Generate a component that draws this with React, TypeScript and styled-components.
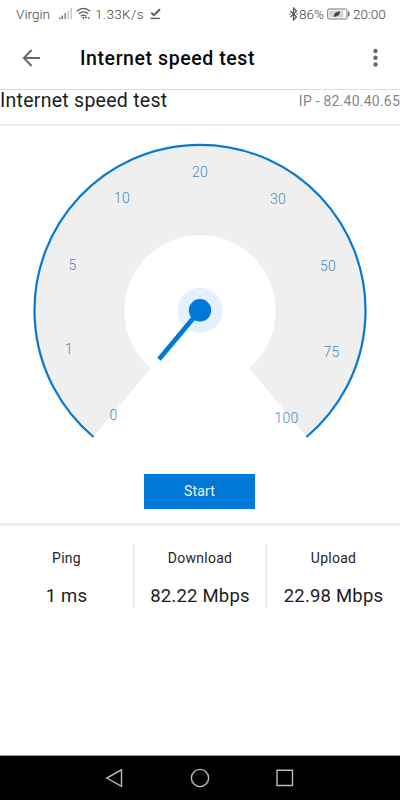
import React from "react";
import styled, { createGlobalStyle } from "styled-components";

const GlobalStyle = createGlobalStyle`
  * { box-sizing: border-box; }
  body { margin: 0; background: #fff; font-family: Roboto, "Noto Sans", sans-serif; }
  svg { display: block; flex: none; }
`;

const Screen = styled.main`
  width: 400px;
  height: 800px;
  display: flex;
  flex-direction: column;
  background: #fff;
  overflow: hidden;
`;

const StatusBar = styled.div`
  height: 28px;
  padding: 0 13px 0 16px;
  display: flex;
  align-items: center;
  justify-content: space-between;
  color: #444;
  font-size: 13.5px;
  font-weight: 300;
  line-height: 28px;
  white-space: nowrap;
`;

const StatusGroup = styled.div<{ $gap?: number }>`
  display: flex;
  align-items: center;
  gap: ${(p) => p.$gap ?? 0}px;
`;

const StatusText = styled.span<{ $width: number; $spacing?: number }>`
  width: ${(p) => p.$width}px;
  letter-spacing: ${(p) => p.$spacing ?? 0}px;
`;

const AppBar = styled.header`
  height: 62px;
  display: flex;
  align-items: center;
  padding: 0 12px 2px 19px;
  border-bottom: 1px solid #dcdcdc;
`;

const IconButton = styled.button`
  border: 0;
  padding: 0;
  background: none;
  width: 24px;
  height: 24px;
`;

const Title = styled.h1`
  margin: 0 0 0 37px;
  padding-top: 2px;
  flex: 1;
  font-size: 19.5px;
  font-weight: 500;
  line-height: 24px;
  letter-spacing: 0.58px;
  color: #080808;
`;

const SubHeader = styled.div`
  height: 36px;
  display: flex;
  justify-content: space-between;
  border-bottom: 2px solid #efefef;
  white-space: nowrap;
`;

const SubTitle = styled.h2`
  margin: 0;
  font-size: 19.5px;
  font-weight: 400;
  line-height: 22px;
  letter-spacing: 0.26px;
  color: #1c1c1c;
`;

const Address = styled.span`
  font-size: 14px;
  line-height: 22px;
  letter-spacing: 0.23px;
  color: #858585;
`;

const TestPanel = styled.section`
  height: 400px;
  display: flex;
  flex-direction: column;
  align-items: center;
  border-bottom: 3px solid #eee;
`;

const GaugeLabel = styled.text`
  font-size: 14px;
  font-weight: 300;
  letter-spacing: 0.3px;
  fill: #4a88c0;
  text-anchor: middle;
`;

const StartButton = styled.button`
  margin: 24px 1px 0 0;
  width: 111px;
  height: 35px;
  border: 0;
  padding: 0;
  background: #0078d7;
  color: #e9f6ff;
  font: 400 14px/35px Roboto, sans-serif;
  letter-spacing: 0.2px;
`;

const Results = styled.section`
  margin-top: 17px;
  height: 65px;
  display: grid;
  grid-template-columns: 135px 132px 133px;
`;

const Result = styled.div`
  display: flex;
  flex-direction: column;
  align-items: center;
  border-right: 2px solid #ececec;
  white-space: nowrap;
  &:last-child { border-right: 0; }
`;

const ResultName = styled.span`
  margin-top: 7px;
  font-size: 14px;
  line-height: 17px;
  letter-spacing: 0.25px;
  color: #252525;
`;

const ResultValue = styled.span`
  margin-top: 18px;
  font-size: 18.5px;
  line-height: 22px;
  letter-spacing: 0.2px;
  color: #1c1c1c;
`;

const NavBar = styled.nav`
  margin-top: auto;
  height: 45px;
  background: #000;
  border-top: 1px solid #999;
  display: flex;
  align-items: center;
  justify-content: center;
  gap: 61px;
`;

const marks = [
  { value: 0, x: 113.5, y: 419.5 },
  { value: 1, x: 69, y: 353.5 },
  { value: 5, x: 72.5, y: 269.5 },
  { value: 10, x: 122, y: 203 },
  { value: 20, x: 200, y: 177 },
  { value: 30, x: 278, y: 203.5 },
  { value: 50, x: 328, y: 271 },
  { value: 75, x: 331.5, y: 357 },
  { value: 100, x: 286.5, y: 423 },
];

const results = [
  { name: "Ping", value: "1 ms" },
  { name: "Download", value: "82.22 Mbps" },
  { name: "Upload", value: "22.98 Mbps" },
];

const SignalIcon = () => (
  <svg width="14" height="14" viewBox="0 0 14 14">
    <path d="M0 10.5h1.5V12H0z M2.5 8.5H4V12H2.5z" fill="#666" />
    <path d="M5.4 6H7v6H5.4z" fill="#888" />
    <path d="M8.3 3.5H10V12H8.3z M11.3 1H13v11h-1.7z" fill="#ccc" />
  </svg>
);

const WifiIcon = () => (
  <svg width="16" height="14" viewBox="0 0 16 14" fill="none" stroke="#555" strokeWidth="1.2">
    <path d="M.6 4.4Q7.5-1.6 14.4 4.4 M2.8 6.9Q7.5 3 12.2 6.9 M4.8 9.2Q7.5 7 10.2 9.2" />
    <path d="M6.1 10.1h2.8L7.5 12.2z" fill="#555" stroke="none" />
    <path d="M8.9 11.2l1.2-2 1.2 2z M11.5 10.2H14L12.7 12.2z" fill="#555" stroke="none" />
  </svg>
);

const CheckIcon = () => (
  <svg width="11" height="12" viewBox="0 0 11 12" fill="none" stroke="#555">
    <path d="M1.3 4.6l2.6 2.6L10 1.2" strokeWidth="1.9" />
    <path d="M.5 10.4h9.3" strokeWidth="1.4" />
  </svg>
);

const BluetoothIcon = () => (
  <svg width="10" height="14" viewBox="0 0 10 14" fill="none" stroke="#555" strokeWidth="1.2">
    <path d="M1.5 4l6 6L4.5 13V1l3 3-6 6" />
    <path d="M.2 7h1.6M7.2 7h1.6" />
  </svg>
);

const BatteryIcon = () => (
  <svg width="23" height="12" viewBox="0 0 23 12">
    <rect x=".7" y="1" width="19.3" height="10" rx="1.2" fill="#fff" stroke="#777" />
    <path d="M2.3 2.5h14v7h-14z" fill="#d4d4d4" />
    <path d="M7 9V6.8Q8 3.7 13 3.2 13 7.8 9.2 8.2L7.5 9z" fill="#444" />
    <path d="M21 3.5h1.5v5H21z" fill="#777" />
  </svg>
);

export default function App() {
  return (
    <>
      <GlobalStyle />
      <Screen>
        <StatusBar>
          <StatusGroup $gap={3}>
            <StatusText $width={40} $spacing={0.05}>Virgin</StatusText>
            <SignalIcon />
            <WifiIcon />
            <StatusText $width={52} $spacing={0.35}>1.33K/s</StatusText>
            <CheckIcon />
          </StatusGroup>
          <StatusGroup>
            <BluetoothIcon />
            <StatusText $width={28}>86%</StatusText>
            <StatusGroup $gap={3}>
              <BatteryIcon />
              <StatusText $width={34}>20:00</StatusText>
            </StatusGroup>
          </StatusGroup>
        </StatusBar>
        <AppBar>
          <IconButton aria-label="Back">
            <svg width="24" height="24" viewBox="0 0 24 24" fill="none" stroke="#666" strokeWidth="1.9">
              <path d="M21 12H5M12.6 4L4.8 12l7.8 8" />
            </svg>
          </IconButton>
          <Title>Internet speed test</Title>
          <IconButton aria-label="More options">
            <svg width="24" height="24" viewBox="0 0 24 24" fill="#686868">
              <circle cx="11.5" cy="5" r="2.2" />
              <circle cx="11.5" cy="11.8" r="2.2" />
              <circle cx="11.5" cy="18.5" r="2.2" />
            </svg>
          </IconButton>
        </AppBar>
        <SubHeader>
          <SubTitle>Internet speed test</SubTitle>
          <Address>IP - 82.40.40.65</Address>
        </SubHeader>
        <TestPanel>
          <svg width="400" height="324" viewBox="0 126 400 324">
            <path d="M93.5 437A165.5 165.5 0 1 1 306.5 437L249 368A75.5 75.5 0 1 0 151 368Z" fill="#efefef" />
            <path d="M93.5 437A165.5 165.5 0 1 1 306.5 437" fill="none" stroke="#0879cf" strokeWidth="2.2" />
            {marks.map((m) => (
              <GaugeLabel key={m.value} x={m.x} y={m.y}>{m.value}</GaugeLabel>
            ))}
            <circle cx="200" cy="310.3" r="22.5" fill="#e4f1fc" />
            <path d="M200 310.3L159 359.3" stroke="#0078d7" strokeWidth="4.8" />
            <circle cx="200" cy="310.3" r="11.2" fill="#0078d7" />
          </svg>
          <StartButton>Start</StartButton>
        </TestPanel>
        <Results>
          {results.map((r) => (
            <Result key={r.name}>
              <ResultName>{r.name}</ResultName>
              <ResultValue>{r.value}</ResultValue>
            </Result>
          ))}
        </Results>
        <NavBar>
          <svg width="24" height="24" viewBox="0 0 24 24" fill="none" stroke="#bbb" strokeWidth="1.4">
            <path d="M18.5 3.8v16.6L3.8 12.1z" />
          </svg>
          <svg width="24" height="24" viewBox="0 0 24 24" fill="none" stroke="#bbb" strokeWidth="1.4">
            <circle cx="12" cy="12" r="8.6" />
          </svg>
          <svg width="24" height="24" viewBox="0 0 24 24" fill="none" stroke="#bbb" strokeWidth="1.4">
            <path d="M4 4.3h15.5v15.2H4z" />
          </svg>
        </NavBar>
      </Screen>
    </>
  );
}
